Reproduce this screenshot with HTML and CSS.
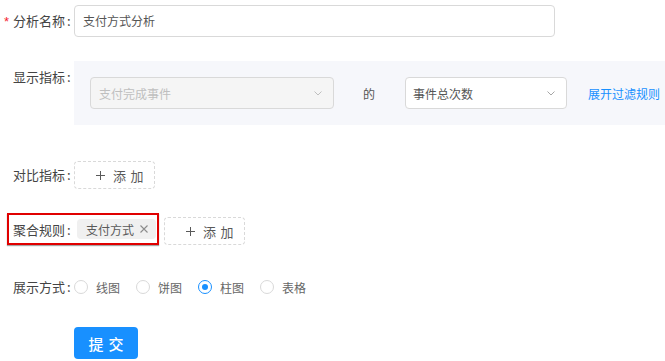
FILE: index.html
```html
<!DOCTYPE html>
<html lang="zh-CN">
<head>
<meta charset="utf-8">
<title>分析</title>
<link rel="stylesheet" href="styles.css">
</head>
<body>
<form class="form">
  <div class="row row-name">
    <label class="label"><span class="star">*</span>分析名称<span class="colon">:</span></label>
    <div class="input">支付方式分析</div>
  </div>

  <div class="row row-metric">
    <label class="label label-top">显示指标<span class="colon">:</span></label>
    <div class="panel">
      <div class="select select-disabled">
        <span>支付完成事件</span>
        <svg class="arrow" width="8" height="5" viewBox="0 0 8 5"><polyline points="0.5,0.5 4,4 7.5,0.5" fill="none" stroke="#bfbfbf" stroke-width="1"/></svg>
      </div>
      <span class="of">的</span>
      <div class="select select-count">
        <span>事件总次数</span>
        <svg class="arrow" width="8" height="5" viewBox="0 0 8 5"><polyline points="0.5,0.5 4,4 7.5,0.5" fill="none" stroke="#a6a6a6" stroke-width="1"/></svg>
      </div>
      <a class="link">展开过滤规则</a>
    </div>
  </div>

  <div class="row row-compare">
    <label class="label">对比指标<span class="colon">:</span></label>
    <button type="button" class="add-btn">
      <svg width="9" height="9" viewBox="0 0 9 9"><path d="M4.5 0v9M0 4.5h9" stroke="#595959" stroke-width="1"/></svg>
      <span class="two-chars">添加</span>
    </button>
  </div>

  <div class="row row-group">
    <div class="highlight">
      <label class="label-inline">聚合规则<span class="colon">:</span></label>
      <span class="tag"><span>支付方式</span><svg class="tag-close" width="8" height="8" viewBox="0 0 8 8"><path d="M0.5 0.5L7.5 7.5M7.5 0.5L0.5 7.5" stroke="#8c8c8c" stroke-width="1.1"/></svg></span>
    </div>
    <button type="button" class="add-btn add-btn-group">
      <svg width="9" height="9" viewBox="0 0 9 9"><path d="M4.5 0v9M0 4.5h9" stroke="#595959" stroke-width="1"/></svg>
      <span class="two-chars">添加</span>
    </button>
  </div>

  <div class="row row-display">
    <label class="label">展示方式<span class="colon">:</span></label>
    <div class="radios">
      <span class="radio"><span class="circle"></span><span class="radio-text">线图</span></span>
      <span class="radio"><span class="circle"></span><span class="radio-text">饼图</span></span>
      <span class="radio"><span class="circle checked"></span><span class="radio-text">柱图</span></span>
      <span class="radio"><span class="circle"></span><span class="radio-text">表格</span></span>
    </div>
  </div>

  <div class="row row-submit">
    <button type="button" class="submit"><span class="two-chars">提交</span></button>
  </div>
</form>
</body>
</html>
```

FILE: styles.css
```css
* { box-sizing: border-box; }
html, body { margin: 0; padding: 0; overflow: hidden; background: #fff; }
body {
  font-family: "Noto Sans CJK SC", "Noto Sans", "Liberation Sans", sans-serif;
  font-size: 12px;
  color: #444;
}
.form { display: flex; flex-direction: column; padding-top: 5px; }
.row { display: flex; align-items: center; }

.label {
  flex: 0 0 74px;
  padding-left: 13px;
  font-size: 13px;
  color: #444;
  position: relative;
  line-height: 32px;
  white-space: nowrap;
}
.label-top { align-self: flex-start; }
.colon { margin-left: 2px; }
.star {
  position: absolute;
  left: 4px;
  top: 1px;
  color: #f5222d;
  font-family: "Liberation Sans", sans-serif;
  font-size: 13px;
}

.row-name { height: 32px; }
.input {
  width: 481px;
  height: 32px;
  border: 1px solid #d9d9d9;
  border-radius: 4px;
  padding: 0 8px;
  line-height: 30px;
  color: #555;
}

.row-metric { margin-top: 24px; align-items: flex-start; }
.panel {
  flex: 1;
  background: #f6f7fb;
  padding: 16px;
  display: flex;
  align-items: center;
  height: 64px;
}
.select {
  height: 32px;
  border: 1px solid #d9d9d9;
  border-radius: 4px;
  display: flex;
  align-items: center;
  justify-content: space-between;
  padding: 0 11px 0 8px;
  background: #fff;
  color: #555;
}
.select-disabled { width: 244px; background: #f5f5f5; color: #bfbfbf; }
.select-count { width: 162px; padding-left: 7px; }
.arrow { display: block; }
.of { margin: 0 30px 0 29px; color: #555; }
.link { margin-left: 21px; color: #1890ff; white-space: nowrap; }

.row-compare { margin-top: 36px; height: 28px; }
.add-btn {
  width: 81px;
  height: 28px;
  border: 1px dashed #d9d9d9;
  border-radius: 4px;
  background: #fff;
  display: flex;
  align-items: center;
  padding: 0 0 0 21px;
  font-family: inherit;
  font-size: 13px;
  color: #595959;
  cursor: pointer;
}
.add-btn svg { display: block; flex: none; }
.add-btn .two-chars { margin-left: 8px; }
.two-chars { letter-spacing: 0.34em; }

.row-group { margin-top: 24px; align-items: flex-start; }
.highlight {
  margin-left: 7px;
  height: 32px;
  width: 152px;
  border: 2px solid #e00000;
  box-shadow: 0 1px 1px rgba(0,0,0,0.35);
  display: flex;
  align-items: center;
  padding: 0 0 0 4px;
}
.label-inline { flex: 0 0 64px; font-size: 13px; color: #444; white-space: nowrap; }
.tag {
  flex: 0 0 79px;
  height: 20px;
  background: #f0f0f0;
  border-radius: 4px;
  padding: 0 0 0 9px;
  display: flex;
  align-items: center;
  color: #595959;
  white-space: nowrap;
}
.tag-close { display: block; margin-left: 6px; }
.add-btn-group { margin-left: 5px; margin-top: 4px; }

.row-display { margin-top: 26px; height: 32px; }
.radios { display: flex; align-items: center; }
.radio { display: flex; align-items: center; margin-right: 8px; }
.circle {
  width: 14px;
  height: 14px;
  border: 1px solid #d9d9d9;
  border-radius: 50%;
  background: #fff;
  position: relative;
}
.circle.checked { border-color: #1890ff; }
.circle.checked::after {
  content: "";
  position: absolute;
  left: 3px;
  top: 3px;
  width: 6px;
  height: 6px;
  border-radius: 50%;
  background: #1890ff;
}
.radio-text { padding: 0 8px; color: #666; }

.row-submit { margin-top: 24px; padding-left: 74px; }
.submit {
  width: 64px;
  height: 32px;
  border: none;
  border-radius: 4px;
  background: #1890ff;
  color: #fff;
  font-family: inherit;
  font-size: 15px;
  font-weight: 500;
  padding: 0 0 0 5px;
  cursor: pointer;
}
```
